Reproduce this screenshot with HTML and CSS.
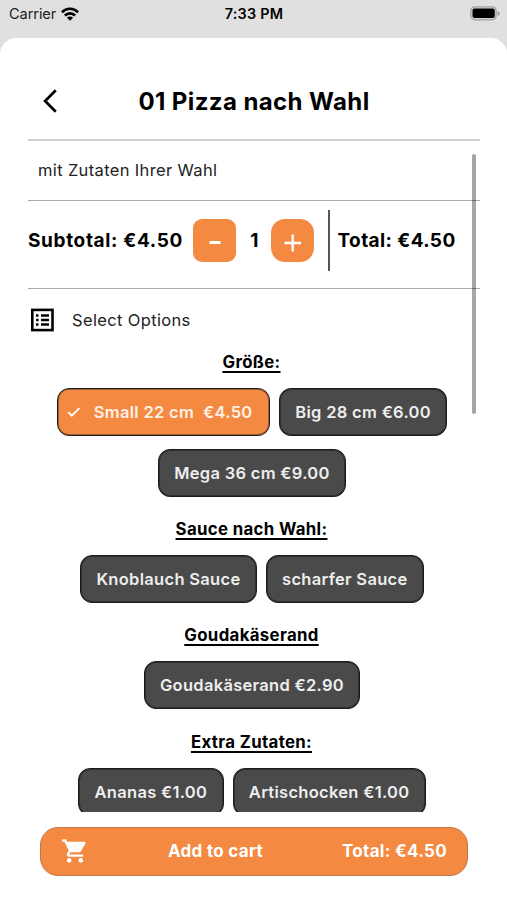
FILE: index.html
```html
<!DOCTYPE html>
<html lang="de">
<head>
<meta charset="utf-8">
<title>01 Pizza nach Wahl</title>
<link rel="stylesheet" href="styles.css">
</head>
<body>
<div class="status">
  <div class="carrier"><span>Carrier</span>
    <svg width="18" height="14" viewBox="0 0 18 14"><g fill="none" stroke="#000" stroke-width="2.700"><path d="M.9 5.200C5.500.6 12.500.6 17.100 5.200"/><path d="M3.900 8.500c2.900-2.900 7.300-2.900 10.200 0"/></g><path d="M9 13.700 5.900 10.800c1.800-1.600 4.400-1.600 6.200 0z"/></svg>
  </div>
  <span class="time">7:33 PM</span>
  <svg class="battery" width="31" height="15" viewBox="0 0 31 15"><rect x="1.800" y=".8" width="25.400" height="13" rx="4" fill="#d2d2d2" stroke="#a2a2a2" stroke-width="1.300"/><rect x="3.500" y="2.500" width="22.300" height="9.600" rx="2"/><path d="M28.700 5v5q2-.8 2-2.500t-2-2.500z" fill="#999"/></svg>
</div>
<main class="sheet">
  <header class="header">
    <svg class="back" width="16" height="24" viewBox="0 0 16 24"><path d="M13.800 1.300 3.100 12l10.700 10.700" fill="none" stroke="#000" stroke-width="2.700"/></svg>
    <h1>01 Pizza nach Wahl</h1>
  </header>
  <section class="content">
    <p class="description">mit Zutaten Ihrer Wahl</p>
    <div class="totals">
      <b class="subtotal">Subtotal: €4.50</b>
      <button class="step minus"><svg width="20" height="20" viewBox="0 0 20 20"><path d="M4.500 9.500h11" stroke="#fff" stroke-width="3"/></svg></button>
      <b class="count">1</b>
      <button class="step plus"><svg width="20" height="20" viewBox="0 0 20 20"><path d="M1.500 10h16.500M9.700 1.500v17" stroke="#fff" stroke-width="2.400"/></svg></button>
      <i class="divider"></i>
      <b class="total">Total: €4.50</b>
    </div>
    <div class="select">
      <svg width="24" height="24" viewBox="0 0 24 24"><rect x="2.300" y="1.900" width="20.200" height="20.200" fill="none" stroke="#000" stroke-width="2.600"/><path d="M6 7.500h2.500M11 7.500h8M6 12h2.500M11 12h8M6 16.500h2.500M11 16.500h8" stroke="#000" stroke-width="2.300"/></svg>
      <span>Select Options</span>
    </div>
    <h2>Größe:</h2>
    <div class="chips">
      <button class="chip selected"><svg width="14" height="12" viewBox="0 0 14 12"><path d="m1.300 6.200 3.500 3.500 7.600-7.600" fill="none" stroke="#fff" stroke-width="1.800"/></svg><span>Small 22 cm&nbsp; €4.50</span></button>
      <button class="chip">Big 28 cm €6.00</button>
      <button class="chip">Mega 36 cm €9.00</button>
    </div>
    <h2>Sauce nach Wahl:</h2>
    <div class="chips"><button class="chip">Knoblauch Sauce</button><button class="chip">scharfer Sauce</button></div>
    <h2>Goudakäserand</h2>
    <div class="chips"><button class="chip">Goudakäserand €2.90</button></div>
    <h2>Extra Zutaten:</h2>
    <div class="chips"><button class="chip">Ananas €1.00</button><button class="chip">Artischocken €1.00</button></div>
    <i class="scrollbar"></i>
  </section>
  <button class="cart">
    <svg width="28" height="28" viewBox="0 0 24 24" fill="#fff"><path d="M7 18c-1.100 0-1.990.9-1.990 2S5.900 22 7 22s2-.9 2-2-.9-2-2-2zM1 2v2h2l3.600 7.590-1.350 2.450c-.16.280-.25.610-.25.960 0 1.100.9 2 2 2h12v-2H7.420c-.14 0-.25-.11-.25-.25l.03-.12.900-1.630h7.450c.75 0 1.410-.41 1.750-1.030l3.580-6.490A1 1 0 0 0 20 4H5.210l-.94-2H1zm16 16c-1.100 0-1.990.9-1.990 2s.89 2 1.990 2 2-.9 2-2-.9-2-2-2z"/></svg>
    <span>Add to cart</span>
    <span>Total: €4.50</span>
  </button>
</main>
</body>
</html>
```
FILE: styles.css
```css
* { box-sizing: border-box; }
body {
  margin: 0;
  height: 900px;
  overflow: hidden;
  background: #e0e0e0;
  color: #000;
  font-family: Inter, sans-serif;
  display: flex;
  flex-direction: column;
}
h1, h2, p { margin: 0; }
button { font: inherit; color: #fff; margin: 0; padding: 0; border: 0; }
svg { display: block; flex: none; }
.status {
  flex: none;
  height: 37.5px;
  padding: 0 7px 10.500px 9px;
  display: grid;
  grid-template-columns: 1fr auto 1fr;
  align-items: center;
  font-size: 14.600px;
}
.carrier { display: flex; align-items: center; gap: 5px; color: #222; letter-spacing: -.1px; }
.time { font-weight: 600; font-size: 14.400px; letter-spacing: .25px; margin-right: 1px; }
.battery { justify-self: end; }
.sheet {
  flex: 1;
  min-height: 0;
  background: #fff;
  border-radius: 16px 16px 0 0;
  padding: 0 27px 0 28px;
  display: flex;
  flex-direction: column;
}
.header {
  flex: none;
  height: 103.500px;
  padding-top: 26px;
  border-bottom: 2px solid #cfcfcf;
  display: grid;
  grid-template-columns: 30px 1fr 30px;
  align-items: center;
}
.back { margin-left: 13.500px; }
h1 { text-align: center; font-size: 24px; font-weight: 650; letter-spacing: .4px; white-space: nowrap; }
.content {
  position: relative;
  flex: none;
  height: 671px;
  overflow: hidden;
}
.description {
  height: 59.500px;
  padding-left: 10px;
  line-height: 58px;
  font-size: 16.500px;
  letter-spacing: .35px;
  color: #222;
  border-bottom: 1px solid #aaa;
}
.totals {
  height: 88px;
  padding-bottom: 7px;
  display: flex;
  align-items: center;
  font-size: 19px;
  letter-spacing: .5px;
  white-space: nowrap;
  border-bottom: 1px solid #aaa;
}
.totals b { font-weight: 680; }
.totals .subtotal { width: 165px; letter-spacing: .65px; }
.totals .total { letter-spacing: .4px; }
.step {
  flex: none;
  width: 43px;
  height: 43px;
  background: #f48a42;
  display: grid;
  place-items: center;
  padding-top: 5px;
}
.minus { border-radius: 9px; }
.plus { border-radius: 14px; }
.count { width: 35px; padding-left: 2px; text-align: center; }
.divider { width: 2px; height: 61px; margin: 0 7.500px 0 14px; background: #555; }
.select {
  height: 61px;
  padding: 1px 0 0 2px;
  display: flex;
  align-items: center;
  gap: 18px;
  font-size: 16.500px;
  letter-spacing: .35px;
  color: #222;
}
h2 {
  height: 24px;
  line-height: 24px;
  padding-right: 5px;
  text-align: center;
  font-size: 16.800px;
  font-weight: 670;
  letter-spacing: .35px;
  text-decoration: underline;
  text-decoration-thickness: 1.500px;
  text-underline-offset: 3px;
  text-decoration-skip-ink: none;
}
.chips {
  display: flex;
  flex-wrap: wrap;
  justify-content: center;
  gap: 13.300px 9px;
  padding: 14px 24px 20.300px 20px;
}
.chip {
  height: 48px;
  padding: 0 15.300px;
  border: 1px solid #1c1c1c;
  box-shadow: inset 0 0 0 1px #303030;
  border-radius: 12px;
  background: #4a4a4a;
  color: #eee;
  font-size: 16.500px;
  font-weight: 560;
  letter-spacing: .3px;
  white-space: nowrap;
}
.selected {
  display: flex;
  align-items: center;
  gap: 13px;
  padding-left: 9px;
  padding-right: 16.500px;
  box-shadow: inset 0 0 0 1px #a05f34;
  background: #f48a42;
  color: #fff0e5;
}
.scrollbar {
  position: absolute;
  top: 12.500px;
  right: 4px;
  width: 4px;
  height: 260px;
  border-radius: 2px;
  background: rgba(0, 0, 0, .35);
}
.cart {
  flex: none;
  height: 49px;
  margin: 14.500px 12px 0;
  padding: 0 20px;
  border: 1.500px solid #c27443;
  border-radius: 18px;
  background: #f48a42;
  display: flex;
  align-items: center;
  justify-content: space-between;
  font-size: 17px;
  font-weight: 680;
  letter-spacing: .3px;
}
```
